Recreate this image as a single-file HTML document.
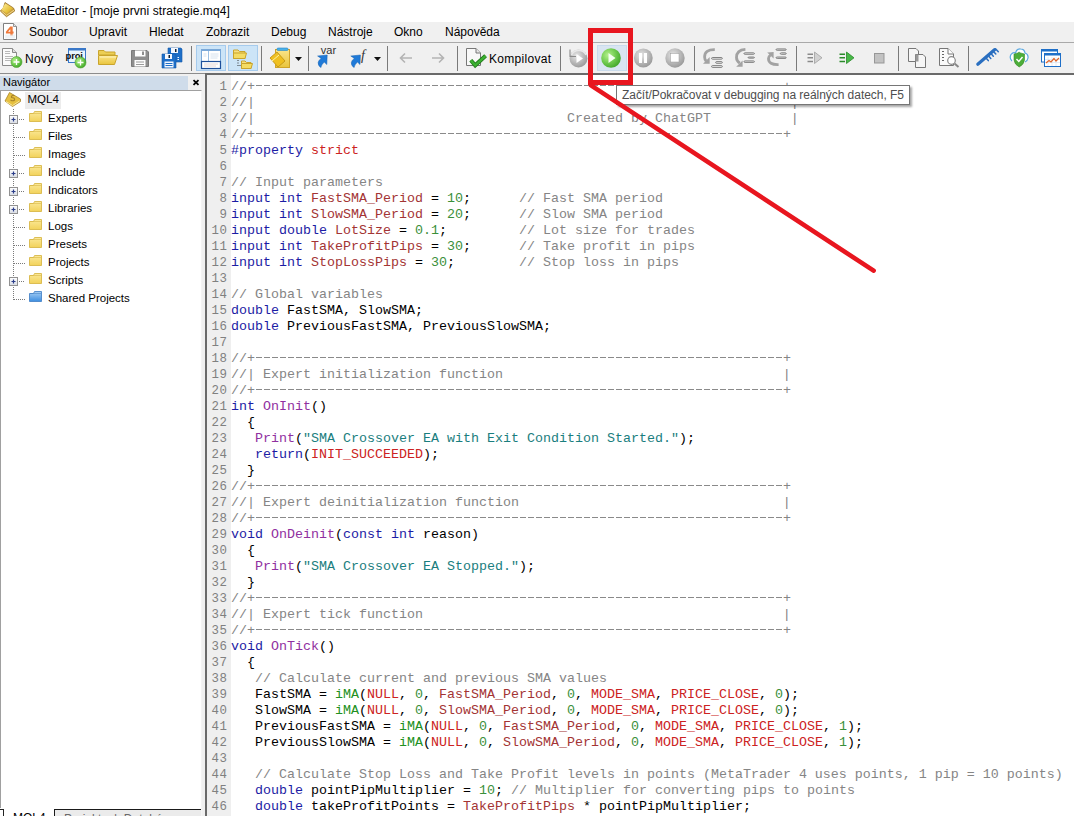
<!DOCTYPE html>
<html><head><meta charset="utf-8">
<style>
*{margin:0;padding:0;box-sizing:border-box}
html,body{width:1074px;height:820px;overflow:hidden;background:#fff;font-family:"Liberation Sans",sans-serif;font-size:12px;color:#000}
svg{position:absolute;overflow:visible}
#title{position:absolute;left:0;top:0;width:1074px;height:22px;background:#fff}
#title .t{position:absolute;left:20px;top:4px;letter-spacing:.08px;font-size:12px;line-height:14px;color:#000}
#menu{position:absolute;left:0;top:22px;width:1074px;height:20px;background:#f0f0f0}
#menu span{position:absolute;top:3px;font-size:12px;line-height:14px;color:#000}
#tb{position:absolute;left:0;top:42px;width:1074px;height:32px;background:#f0f0f0}
#tbl1{position:absolute;left:0;top:42px;width:1074px;height:1px;background:#a9a9a9}
#tbl2{position:absolute;left:0;top:73px;width:1074px;height:1px;background:#8c8c8c}
.sep{position:absolute;top:46px;width:1px;height:25px;background:#7a7a7a}
.btn{position:absolute;top:45px;height:26px;background:#cce4f7;border:1px solid #a6cbed}
.lbl{position:absolute;font-size:12px;line-height:14px;color:#000;letter-spacing:.3px}
#nav{position:absolute;left:0;top:74px;width:205px;height:746px;background:#f0f0f0}
#navh{position:absolute;left:0;top:2px;width:188px;height:14px;background:#cfdcea}
#navh .t{position:absolute;left:3px;top:0px;font-size:11px;line-height:13px}
#navx{position:absolute;left:192px;top:5px}
#navbox{position:absolute;left:0;top:16px;width:202px;height:726px;background:#fff;border-top:1px solid #a0a0a0;border-right:1px solid #f4f4f4}
#navlb{position:absolute;left:0;top:90px;width:1px;height:718px;background:#a0a0a0}
#btab{position:absolute;left:0;top:808px;width:202px;height:8px;overflow:hidden}
.row{position:absolute;left:48px;font-size:11.5px;line-height:13px;color:#000}
#ed{position:absolute;left:205px;top:73px;width:869px;height:747px;background:#fff;border-left:2px solid #6a6a6a;border-top:2px solid #6a6a6a}
#gut{position:absolute;left:0;top:0;width:24px;height:745px;background:#efefef}
#nums{position:absolute;left:0;top:3.5px;width:20.5px;text-align:right;font-family:"Liberation Mono",monospace;font-size:12.4px;letter-spacing:.6px;line-height:16px;color:#808080}
#code{position:absolute;left:24px;top:3.5px;font-family:"Liberation Mono",monospace;font-size:13.33px;line-height:16px;color:#000;white-space:pre}
#code i{font-style:normal}
#code div{height:16px}
#code b.d{display:inline-block;height:16px;vertical-align:top;background:repeating-linear-gradient(90deg,transparent 0 1px,#8a8a8a 1px 7px,transparent 7px 8px) 0 6px/100% 1px no-repeat}
.k{color:#1c1ca4}.v{color:#a33434}.n{color:#3a903a}.f{color:#9030a0}.s{color:#1a7e7e}.c{color:#cc2222}.g{color:#858585}.b{color:#209020}
#tip{position:absolute;left:616px;top:85px;width:294px;height:20px;background:#fff;border:1px solid #767676;box-shadow:2px 2px 2px rgba(0,0,0,.35)}
#tip .t{position:absolute;left:5px;top:2px;font-size:12px;line-height:14px;color:#4e4e4e;white-space:nowrap;letter-spacing:-.045px}
#bot{position:absolute;left:0;top:816px;width:1074px;height:4px;background:#fff}
</style></head><body>
<div id="title">
<svg width="16" height="18" style="left:0;top:0">
<defs><linearGradient id="tg" x1="0" y1="0" x2="1" y2="1"><stop offset="0" stop-color="#fff0a0"/><stop offset=".6" stop-color="#e8c440"/><stop offset="1" stop-color="#c89a20"/></linearGradient></defs>
<path d="M5 2.5 L13.5 8 L14.7 11 L6.5 16.7 L0.3 11 L3.3 8 Z" fill="#caa040" stroke="#9a7428" stroke-width=".8"/>
<path d="M5.3 3.5 L13 8.3 L6.8 13.8 L1.5 9.8 Z" fill="url(#tg)"/>
<path d="M1.5 11 L6.6 15.3 L14 10.2" fill="none" stroke="#f4dc90" stroke-width=".9"/>
</svg>
<div class="t">MetaEditor - [moje prvni strategie.mq4]</div></div>
<div id="menu">
<svg width="16" height="18" style="left:3px;top:1px"><path d="M0.5 0.5 H10.5 L13.5 3.5 V16.5 H0.5 Z" fill="#fff" stroke="#808080"/><path d="M10.5 0.5 V3.5 H13.5" fill="#e4e4e4" stroke="#808080" stroke-width=".8"/><path d="M7.2 3.4 H9.7 V8.6 H10.6 V10.6 H9.7 V12.7 H7.3 V10.6 H2.9 V8.7 Z M7.3 6.2 L5.1 8.7 H7.3 Z" fill="#ef7a3c" fill-rule="evenodd"/><rect x="2" y="11.5" width="10" height="4" fill="#e8eef2" opacity=".7"/></svg>
<span style="left:29px">Soubor</span>
<span style="left:89px">Upravit</span>
<span style="left:149px">Hledat</span>
<span style="left:206px">Zobrazit</span>
<span style="left:271px">Debug</span>
<span style="left:328px">Nástroje</span>
<span style="left:394px">Okno</span>
<span style="left:445px">Nápověda</span>
</div>
<div id="tb"></div><div id="tbl1"></div><div id="tbl2"></div>

<div class="sep" style="left:191px"></div>
<div class="sep" style="left:261px"></div>
<div class="sep" style="left:308px"></div>
<div class="sep" style="left:387px"></div>
<div class="sep" style="left:457px"></div>
<div class="sep" style="left:560px"></div>
<div class="sep" style="left:694px"></div>
<div class="sep" style="left:796px"></div>
<div class="sep" style="left:898px"></div>
<div class="sep" style="left:968px"></div>
<div class="btn" style="left:196px;width:30px"></div>
<div class="btn" style="left:228px;width:30px"></div>
<div class="btn" style="left:597px;width:30px;background:#d9e5f1;border-color:#c9dbec"></div>
<div class="lbl" style="left:25px;top:52px">Nový</div>
<div class="lbl" style="left:489px;top:52px">Kompilovat</div>
<svg width="1074" height="74" style="left:0;top:0">
<defs>
<radialGradient id="gg" cx="35%" cy="35%" r="70%"><stop offset="0" stop-color="#b4f08c"/><stop offset=".55" stop-color="#72cc50"/><stop offset="1" stop-color="#44a82c"/></radialGradient>
<radialGradient id="gr" cx="40%" cy="35%" r="65%"><stop offset="0" stop-color="#e6e6e6"/><stop offset="1" stop-color="#9c9c9c"/></radialGradient>
<linearGradient id="yf" x1="0" y1="0" x2="0" y2="1"><stop offset="0" stop-color="#fbe58a"/><stop offset="1" stop-color="#e9c43c"/></linearGradient>
</defs>
<!-- new doc -->
<path d="M2.5 48.5 H12.5 L16.5 52.5 V65.5 H2.5 Z" fill="#fafafa" stroke="#8a8a8a"/>
<path d="M12.5 48.5 V52.5 H16.5" fill="#e0e0e0" stroke="#8a8a8a"/>
<path d="M5 51.5 H10 M5 53.5 H10 M5 56.5 H13 M5 58.5 H12 M5 60.5 H11" stroke="#b8b8b8"/>
<circle cx="16.5" cy="62" r="5.5" fill="url(#gg)" stroke="#4aa02a" stroke-width=".6"/>
<path d="M16.5 59 V65 M13.5 62 H19.5" stroke="#fff" stroke-width="1.3"/>
<!-- proj -->
<rect x="68.5" y="48.5" width="17" height="14" fill="#eaf4fc" stroke="#3a78c8"/>
<rect x="68" y="48" width="18" height="2.5" fill="#3a78c8"/>
<text x="65.6" y="58.6" font-family="Liberation Sans" font-weight="bold" font-size="9.5" fill="#111" letter-spacing="-.2">proj</text>
<circle cx="80.5" cy="62.5" r="5.5" fill="url(#gg)" stroke="#4aa02a" stroke-width=".6"/>
<path d="M80.5 59.5 V65.5 M77.5 62.5 H83.5" stroke="#fff" stroke-width="1.3"/>
<!-- open folder -->
<path d="M98.5 50.5 H104 L105.5 52 H115 V55 H98.5 Z" fill="#eccf55" stroke="#c9a42c"/>
<path d="M98.5 64.5 V55.5 H117.5 L114.5 64.5 Z" fill="url(#yf)" stroke="#c9a42c"/>
<path d="M100 57 H116" stroke="#fff3b8"/>
<!-- save gray -->
<path d="M131.5 50.5 H147 L148.5 52 V66.5 H131.5 Z" fill="#8e8e8e" stroke="#7a7a7a"/>
<rect x="135" y="50.5" width="10.5" height="6" fill="#fdfdfd"/>
<rect x="142" y="51.5" width="2" height="3.5" fill="#8e8e8e"/>
<rect x="134.5" y="60" width="11" height="6.5" fill="#fdfdfd"/>
<path d="M136 62 H144 M136 64.5 H144" stroke="#9a9a9a"/>
<!-- save all blue -->
<path d="M168 48 H181 L182 49 V62 H168 Z" fill="#1e6fc8" stroke="#1558a8" stroke-width=".6"/>
<rect x="171" y="48" width="7" height="5" fill="#f4f8ff"/><rect x="175" y="49" width="1.5" height="3" fill="#123"/>
<path d="M162 54 H175 L176 55 V68 H162 Z" fill="#1e6fc8" stroke="#1558a8" stroke-width=".6"/>
<rect x="165" y="54" width="7" height="5" fill="#f4f8ff"/><rect x="168.5" y="55" width="1.5" height="3" fill="#123"/>
<rect x="164.5" y="61.5" width="9" height="6" fill="#f4f8ff"/>
<path d="M165.5 63.5 H172.5 M165.5 65.5 H172.5" stroke="#1e6fc8"/>
<path d="M177.5 57.5 H179 M177.5 59.5 H179" stroke="#f4f8ff" stroke-width="1.2"/>
<!-- layout icon -->
<rect x="201.5" y="49.5" width="19" height="19" fill="#fff" stroke="#7aa8d8"/>
<rect x="201" y="49" width="20" height="2" fill="#7aa8d8"/>
<path d="M208.5 51 V61" stroke="#9cc0e4"/>
<path d="M203.5 54 H206.5 M203.5 56 H206.5 M210.5 54 H218.5 M210.5 56 H218.5 M210.5 58 H217.5" stroke="#d6e2ee"/>
<rect x="201.5" y="61.5" width="19" height="7" fill="#fff" stroke="#1e4f9a" stroke-width="1.2"/>
<path d="M204 64 H218 M204 66 H216" stroke="#e4d6d6"/>
<!-- toolbox folders -->
<path d="M233.5 50 H238 L239.5 51.5 H245 V58.5 H233.5 Z" fill="url(#yf)" stroke="#c9a42c"/>
<path d="M233.5 53 H246.5 L245 58.5 H233.5 Z" fill="#f4dc64" stroke="#c9a42c"/>
<path d="M241.5 61 H245 L246.5 62.5 H251 V68.5 H241.5 Z" fill="url(#yf)" stroke="#c9a42c"/>
<path d="M241.5 63.5 H252.5 L251 68.5 H241.5 Z" fill="#f4dc64" stroke="#c9a42c"/>
<path d="M238 60 V61 M238 62.5 V63.5 M238 65 V66 M240 65 V66" stroke="#333" stroke-width="1"/>
<!-- book clipboard -->
<rect x="275.5" y="49.5" width="14" height="18" fill="url(#yf)" stroke="#d0a42a"/>
<rect x="277" y="48" width="11" height="2.5" rx="1" fill="#4ab0e8" stroke="#2a88c8" stroke-width=".6"/>
<path d="M270 58 L277 52 L285 61 L278 67 Z" fill="#f0c020" stroke="#c89a18"/>
<path d="M272 61 L279 55" stroke="#fff3a0"/>
<path d="M295 57 H302 L298.5 61 Z" fill="#111"/>
<!-- var -->
<text x="320.8" y="53.8" font-family="Liberation Sans" font-size="11" fill="#333">var</text>
<path d="M317.6 56 L327.2 55 L326.8 64.5 L324.2 62 Q321.5 64.5 320.8 67.6 Q317.6 65.2 318.2 62.2 Q318.8 59.8 321.2 58.4 Z" fill="#1f7ad8" stroke="#1560b0" stroke-width=".5"/>
<!-- f -->
<text x="361" y="59.5" font-family="Liberation Serif" font-style="italic" font-size="14" fill="#333">f</text>
<path d="M350.8 56 L360.4 55 L360 64.5 L357.4 62 Q354.7 64.5 354 67.6 Q350.8 65.2 351.4 62.2 Q352 59.8 354.4 58.4 Z" fill="#1f7ad8" stroke="#1560b0" stroke-width=".5"/>
<path d="M374 57 H381 L377.5 61 Z" fill="#111"/>
<!-- arrows -->
<path d="M401 58 H412 M405 53.5 L400.5 58 L405 62.5" fill="none" stroke="#b4b4b4" stroke-width="1.6"/>
<path d="M432 58 H443 M439 53.5 L443.5 58 L439 62.5" fill="none" stroke="#b4b4b4" stroke-width="1.6"/>
<!-- compile -->
<path d="M466.5 48.5 H476 L480.5 53 V65.5 H466.5 Z" fill="#f8f8f8" stroke="#777"/>
<path d="M476 48.5 V53 H480.5" fill="#e6e6e6" stroke="#777"/>
<path d="M470.8 60.3 L475.2 65.3 L485.6 55.8" fill="none" stroke="#1f7a1a" stroke-width="4"/><path d="M470.8 60.3 L475.2 65.3 L485.6 55.8" fill="none" stroke="#3cb032" stroke-width="2.4"/>
<!-- restart -->
<circle cx="578.5" cy="58.5" r="9" fill="url(#gr)"/>
<path d="M571.5 55 A8 8 0 0 1 586 55" fill="none" stroke="#e8e8e8" stroke-width="1.6"/>
<path d="M570 49.5 V56.5 H576" fill="none" stroke="#8a8a8a" stroke-width="1.1"/>
<path d="M576.5 54 L583 58.5 L576.5 63 Z" fill="#fff"/>
<!-- play -->
<circle cx="611" cy="58" r="9.8" fill="url(#gg)"/>
<path d="M608.5 53 L615.5 58 L608.5 63 Z" fill="#f4fff0"/>
<!-- pause -->
<circle cx="643.3" cy="58" r="9.4" fill="url(#gr)"/>
<rect x="639" y="53" width="3" height="10" fill="#fff"/><rect x="644" y="53" width="3" height="10" fill="#fff"/>
<!-- stop -->
<circle cx="675" cy="58" r="9.7" fill="url(#gr)"/>
<rect x="670.5" y="53.5" width="8.5" height="8.5" fill="#fff" stroke="#999" stroke-width=".5"/>
<!-- step into -->
<path d="M714.8 49.6 Q704.6 49.4 704.6 57 Q704.6 59.5 706.2 61.2" fill="none" stroke="#a2a2a2" stroke-width="2.8"/>
<path d="M703 63.7 L709.7 57 L709.7 63.7 Z" fill="#a2a2a2"/>
<rect x="711.55" y="57.55" width="10.80" height="1.60" rx="1.1" fill="#fbfbfb" stroke="#6e6e6e" stroke-width=".9"/><rect x="715.65" y="61.65" width="6.70" height="1.60" rx="1.1" fill="#fbfbfb" stroke="#6e6e6e" stroke-width=".9"/><rect x="711.55" y="65.65" width="10.80" height="1.70" rx="1.1" fill="#fbfbfb" stroke="#6e6e6e" stroke-width=".9"/>
<!-- step over -->
<path d="M745.4 49.4 Q736.5 50 736.5 57.5 Q736.5 61 739.8 63.2" fill="none" stroke="#a2a2a2" stroke-width="2.8"/>
<path d="M736.2 66.7 L742.6 60.5 L742.6 66.7 Z" fill="#a2a2a2"/>
<rect x="743.95" y="52.85" width="10.50" height="1.40" rx="1.1" fill="#fbfbfb" stroke="#6e6e6e" stroke-width=".9"/><rect x="748.05" y="57.05" width="6.40" height="1.10" rx="1.1" fill="#fbfbfb" stroke="#6e6e6e" stroke-width=".9"/><rect x="743.95" y="60.95" width="10.50" height="1.40" rx="1.1" fill="#fbfbfb" stroke="#6e6e6e" stroke-width=".9"/>
<!-- step out -->
<path d="M778.6 64.6 Q768.5 65 768.5 58.5 Q768.5 56.5 770.5 55" fill="none" stroke="#a2a2a2" stroke-width="2.8"/>
<path d="M767.2 52.4 L773.6 52.1 L773.6 58.6 Z" fill="#a2a2a2"/>
<rect x="776.05" y="48.95" width="10.20" height="1.30" rx="1.1" fill="#fbfbfb" stroke="#6e6e6e" stroke-width=".9"/><rect x="780.25" y="52.85" width="6.00" height="1.40" rx="1.1" fill="#fbfbfb" stroke="#6e6e6e" stroke-width=".9"/><rect x="776.05" y="57.05" width="10.20" height="1.30" rx="1.1" fill="#fbfbfb" stroke="#6e6e6e" stroke-width=".9"/>
<!-- profile gray -->
<path d="M807.5 54.3 H813 M807.5 57.8 H813 M807.5 61.5 H813" stroke="#8a8a8a" stroke-width="1.4"/>
<path d="M814.5 52 L822 57.8 L814.5 63.5 Z" fill="#d2d2d2" stroke="#a0a0a0" stroke-width=".8"/>
<!-- profile green -->
<path d="M839.5 54.3 H845 M839.5 57.8 H845 M839.5 61.5 H845" stroke="#2a8a2a" stroke-width="1.4"/>
<path d="M846.5 52 L854 57.8 L846.5 63.5 Z" fill="#48b848" stroke="#2a8a2a" stroke-width=".8"/>
<!-- gray square -->
<rect x="874.5" y="53.5" width="9.5" height="9.5" fill="#c2c2c2" stroke="#979797"/>
<!-- compare docs -->
<path d="M908.5 48.5 H916 L918.5 51 V61.5 H908.5 Z" fill="#f6f6f6" stroke="#777"/>
<path d="M915.5 54.5 H923 L925.5 57 V67.5 H915.5 Z" fill="#f6f6f6" stroke="#777"/>
<rect x="915.5" y="54.5" width="3" height="7" fill="#9a9a9a"/>
<!-- doc search -->
<path d="M939.5 48.5 H948 L953.5 54 V65.5 H939.5 Z" fill="#fafafa" stroke="#777"/>
<path d="M948 48.5 V54 H953.5" fill="#fff" stroke="#777"/>
<path d="M942 51.5 H944 M942 54.5 H944 M942 57.5 H944 M942 60.5 H944" stroke="#666" stroke-width="1.2"/>
<circle cx="951.5" cy="60.5" r="3.8" fill="#fff" stroke="#888" stroke-width="1.2"/>
<path d="M954.5 63.5 L958.5 67" stroke="#888" stroke-width="2"/>
<!-- comb -->
<path d="M977.8 64.2 L994.5 49.8" stroke="#2a6fc0" stroke-width="3.2" stroke-linecap="round"/>
<path d="M985.5 57.5 l2.8 3.1 M988.0 55.3 l2.8 3.1 M990.5 53.1 l2.8 3.1 M993.0 50.9 l2.8 3.1 M995.5 48.7 l2.8 3.1" stroke="#2a6fc0" stroke-width="1.5" stroke-linecap="round"/>
<!-- cloud shield -->
<path d="M1012 61 Q1009 58 1011 54.5 Q1013 52 1015.5 53 Q1016.5 48.5 1020.5 48.8 Q1024.5 49 1025 53 Q1028.5 54 1028 58 Q1027.5 61 1025 62" fill="#fff" stroke="#5aa8e0" stroke-width="1.2"/>
<path d="M1014 54 Q1019 53 1019 52 Q1019.5 53 1024.5 54 V60 Q1024 64.5 1019.2 67 Q1014.5 64.5 1014 60 Z" fill="#4cae3a" stroke="#3a8a2a" stroke-width=".6"/>
<path d="M1016.5 59 L1018.8 61.5 L1022.5 57" fill="none" stroke="#fff" stroke-width="1.4"/>
<!-- chart windows -->
<rect x="1041.5" y="49.5" width="16" height="12.5" fill="#fff" stroke="#1e6fc8"/>
<rect x="1041" y="49" width="17" height="2.5" fill="#1e6fc8"/>
<rect x="1044.5" y="53.5" width="16" height="13" fill="#fff" stroke="#1e6fc8"/>
<rect x="1044" y="53" width="17" height="2.5" fill="#1e6fc8"/>
<path d="M1048 57 V66 M1052 57 V66 M1056 57 V66 M1045 59.5 H1060 M1045 62.5 H1060" stroke="#dce6f2" stroke-width=".8"/>
<path d="M1046 63 L1049 60.5 L1051 62 L1054 58.5 L1056 61 L1059 58" fill="none" stroke="#e0652a" stroke-width="1.2"/>
</svg>

<div id="nav">
<div id="navh"><div class="t">Navigátor</div></div>
<svg id="navx" width="8" height="8" style="left:192px;top:5px"><path d="M1.5 1.2 L6.5 5.8 M6.5 1.2 L1.5 5.8" stroke="#000" stroke-width="1.8"/></svg>
<div id="navbox"></div>
</div>
<svg width="205" height="320" style="left:0;top:0">
<defs><linearGradient id="fy" x1="0" y1="0" x2="0" y2="1"><stop offset="0" stop-color="#fbe99a"/><stop offset="1" stop-color="#f2d25a"/></linearGradient>
<linearGradient id="fb" x1="0" y1="0" x2="0" y2="1"><stop offset="0" stop-color="#a9d0f5"/><stop offset="1" stop-color="#3d8ee0"/></linearGradient>
<linearGradient id="pb" x1="0" y1="0" x2="0" y2="1"><stop offset="0" stop-color="#ffffff"/><stop offset="1" stop-color="#d8dce4"/></linearGradient></defs>
<path d="M9.5 92.5 L20.5 99 L20.5 101.5 L12.5 106.5 L5 101 Z" fill="#e6c040" stroke="#a8842a" stroke-width=".8"/>
<path d="M6 101.5 L12.5 105.5 L19.5 101" fill="none" stroke="#f8e8a0" stroke-width="1"/>
<path d="M14.5 95.5 Q11 95 11.5 97.5 Q15 97.5 14.5 100 Q13 101.5 10.5 100" fill="none" stroke="#a8842a" stroke-width="1.2"/>
<rect x="13" y="109" width="1" height="1" fill="#7a7a7a"/>
<rect x="13" y="111" width="1" height="1" fill="#7a7a7a"/>
<rect x="13" y="113" width="1" height="1" fill="#7a7a7a"/>
<rect x="13" y="115" width="1" height="1" fill="#7a7a7a"/>
<rect x="13" y="117" width="1" height="1" fill="#7a7a7a"/>
<rect x="13" y="119" width="1" height="1" fill="#7a7a7a"/>
<rect x="13" y="121" width="1" height="1" fill="#7a7a7a"/>
<rect x="13" y="123" width="1" height="1" fill="#7a7a7a"/>
<rect x="13" y="125" width="1" height="1" fill="#7a7a7a"/>
<rect x="13" y="127" width="1" height="1" fill="#7a7a7a"/>
<rect x="13" y="129" width="1" height="1" fill="#7a7a7a"/>
<rect x="13" y="131" width="1" height="1" fill="#7a7a7a"/>
<rect x="13" y="133" width="1" height="1" fill="#7a7a7a"/>
<rect x="13" y="135" width="1" height="1" fill="#7a7a7a"/>
<rect x="13" y="137" width="1" height="1" fill="#7a7a7a"/>
<rect x="13" y="139" width="1" height="1" fill="#7a7a7a"/>
<rect x="13" y="141" width="1" height="1" fill="#7a7a7a"/>
<rect x="13" y="143" width="1" height="1" fill="#7a7a7a"/>
<rect x="13" y="145" width="1" height="1" fill="#7a7a7a"/>
<rect x="13" y="147" width="1" height="1" fill="#7a7a7a"/>
<rect x="13" y="149" width="1" height="1" fill="#7a7a7a"/>
<rect x="13" y="151" width="1" height="1" fill="#7a7a7a"/>
<rect x="13" y="153" width="1" height="1" fill="#7a7a7a"/>
<rect x="13" y="155" width="1" height="1" fill="#7a7a7a"/>
<rect x="13" y="157" width="1" height="1" fill="#7a7a7a"/>
<rect x="13" y="159" width="1" height="1" fill="#7a7a7a"/>
<rect x="13" y="161" width="1" height="1" fill="#7a7a7a"/>
<rect x="13" y="163" width="1" height="1" fill="#7a7a7a"/>
<rect x="13" y="165" width="1" height="1" fill="#7a7a7a"/>
<rect x="13" y="167" width="1" height="1" fill="#7a7a7a"/>
<rect x="13" y="169" width="1" height="1" fill="#7a7a7a"/>
<rect x="13" y="171" width="1" height="1" fill="#7a7a7a"/>
<rect x="13" y="173" width="1" height="1" fill="#7a7a7a"/>
<rect x="13" y="175" width="1" height="1" fill="#7a7a7a"/>
<rect x="13" y="177" width="1" height="1" fill="#7a7a7a"/>
<rect x="13" y="179" width="1" height="1" fill="#7a7a7a"/>
<rect x="13" y="181" width="1" height="1" fill="#7a7a7a"/>
<rect x="13" y="183" width="1" height="1" fill="#7a7a7a"/>
<rect x="13" y="185" width="1" height="1" fill="#7a7a7a"/>
<rect x="13" y="187" width="1" height="1" fill="#7a7a7a"/>
<rect x="13" y="189" width="1" height="1" fill="#7a7a7a"/>
<rect x="13" y="191" width="1" height="1" fill="#7a7a7a"/>
<rect x="13" y="193" width="1" height="1" fill="#7a7a7a"/>
<rect x="13" y="195" width="1" height="1" fill="#7a7a7a"/>
<rect x="13" y="197" width="1" height="1" fill="#7a7a7a"/>
<rect x="13" y="199" width="1" height="1" fill="#7a7a7a"/>
<rect x="13" y="201" width="1" height="1" fill="#7a7a7a"/>
<rect x="13" y="203" width="1" height="1" fill="#7a7a7a"/>
<rect x="13" y="205" width="1" height="1" fill="#7a7a7a"/>
<rect x="13" y="207" width="1" height="1" fill="#7a7a7a"/>
<rect x="13" y="209" width="1" height="1" fill="#7a7a7a"/>
<rect x="13" y="211" width="1" height="1" fill="#7a7a7a"/>
<rect x="13" y="213" width="1" height="1" fill="#7a7a7a"/>
<rect x="13" y="215" width="1" height="1" fill="#7a7a7a"/>
<rect x="13" y="217" width="1" height="1" fill="#7a7a7a"/>
<rect x="13" y="219" width="1" height="1" fill="#7a7a7a"/>
<rect x="13" y="221" width="1" height="1" fill="#7a7a7a"/>
<rect x="13" y="223" width="1" height="1" fill="#7a7a7a"/>
<rect x="13" y="225" width="1" height="1" fill="#7a7a7a"/>
<rect x="13" y="227" width="1" height="1" fill="#7a7a7a"/>
<rect x="13" y="229" width="1" height="1" fill="#7a7a7a"/>
<rect x="13" y="231" width="1" height="1" fill="#7a7a7a"/>
<rect x="13" y="233" width="1" height="1" fill="#7a7a7a"/>
<rect x="13" y="235" width="1" height="1" fill="#7a7a7a"/>
<rect x="13" y="237" width="1" height="1" fill="#7a7a7a"/>
<rect x="13" y="239" width="1" height="1" fill="#7a7a7a"/>
<rect x="13" y="241" width="1" height="1" fill="#7a7a7a"/>
<rect x="13" y="243" width="1" height="1" fill="#7a7a7a"/>
<rect x="13" y="245" width="1" height="1" fill="#7a7a7a"/>
<rect x="13" y="247" width="1" height="1" fill="#7a7a7a"/>
<rect x="13" y="249" width="1" height="1" fill="#7a7a7a"/>
<rect x="13" y="251" width="1" height="1" fill="#7a7a7a"/>
<rect x="13" y="253" width="1" height="1" fill="#7a7a7a"/>
<rect x="13" y="255" width="1" height="1" fill="#7a7a7a"/>
<rect x="13" y="257" width="1" height="1" fill="#7a7a7a"/>
<rect x="13" y="259" width="1" height="1" fill="#7a7a7a"/>
<rect x="13" y="261" width="1" height="1" fill="#7a7a7a"/>
<rect x="13" y="263" width="1" height="1" fill="#7a7a7a"/>
<rect x="13" y="265" width="1" height="1" fill="#7a7a7a"/>
<rect x="13" y="267" width="1" height="1" fill="#7a7a7a"/>
<rect x="13" y="269" width="1" height="1" fill="#7a7a7a"/>
<rect x="13" y="271" width="1" height="1" fill="#7a7a7a"/>
<rect x="13" y="273" width="1" height="1" fill="#7a7a7a"/>
<rect x="13" y="275" width="1" height="1" fill="#7a7a7a"/>
<rect x="13" y="277" width="1" height="1" fill="#7a7a7a"/>
<rect x="13" y="279" width="1" height="1" fill="#7a7a7a"/>
<rect x="13" y="281" width="1" height="1" fill="#7a7a7a"/>
<rect x="13" y="283" width="1" height="1" fill="#7a7a7a"/>
<rect x="13" y="285" width="1" height="1" fill="#7a7a7a"/>
<rect x="13" y="287" width="1" height="1" fill="#7a7a7a"/>
<rect x="13" y="289" width="1" height="1" fill="#7a7a7a"/>
<rect x="13" y="291" width="1" height="1" fill="#7a7a7a"/>
<rect x="13" y="293" width="1" height="1" fill="#7a7a7a"/>
<rect x="13" y="295" width="1" height="1" fill="#7a7a7a"/>
<rect x="13" y="297" width="1" height="1" fill="#7a7a7a"/>
<rect x="13" y="299" width="1" height="1" fill="#7a7a7a"/>
<rect x="19" y="119" width="1" height="1" fill="#7a7a7a"/>
<rect x="21" y="119" width="1" height="1" fill="#7a7a7a"/>
<rect x="23" y="119" width="1" height="1" fill="#7a7a7a"/>
<rect x="9.5" y="115.5" width="8" height="8" fill="url(#pb)" stroke="#919191"/>
<path d="M11.5 119.5 H15.5 M13.5 117.5 V121.5" stroke="#2b3d8a" stroke-width="1.2"/>
<path d="M29.5 113.5 H33.5 L34.5 111.5 H41.5 V121.5 H29.5 Z" fill="url(#fy)" stroke="#d8b848" stroke-width=".9"/>
<path d="M30 113.5 H41" stroke="#d8b848" stroke-width=".6"/>
<rect x="14" y="137" width="1" height="1" fill="#7a7a7a"/>
<rect x="16" y="137" width="1" height="1" fill="#7a7a7a"/>
<rect x="18" y="137" width="1" height="1" fill="#7a7a7a"/>
<rect x="20" y="137" width="1" height="1" fill="#7a7a7a"/>
<rect x="22" y="137" width="1" height="1" fill="#7a7a7a"/>
<rect x="24" y="137" width="1" height="1" fill="#7a7a7a"/>
<path d="M29.5 131.5 H33.5 L34.5 129.5 H41.5 V139.5 H29.5 Z" fill="url(#fy)" stroke="#d8b848" stroke-width=".9"/>
<path d="M30 131.5 H41" stroke="#d8b848" stroke-width=".6"/>
<rect x="14" y="155" width="1" height="1" fill="#7a7a7a"/>
<rect x="16" y="155" width="1" height="1" fill="#7a7a7a"/>
<rect x="18" y="155" width="1" height="1" fill="#7a7a7a"/>
<rect x="20" y="155" width="1" height="1" fill="#7a7a7a"/>
<rect x="22" y="155" width="1" height="1" fill="#7a7a7a"/>
<rect x="24" y="155" width="1" height="1" fill="#7a7a7a"/>
<path d="M29.5 149.5 H33.5 L34.5 147.5 H41.5 V157.5 H29.5 Z" fill="url(#fy)" stroke="#d8b848" stroke-width=".9"/>
<path d="M30 149.5 H41" stroke="#d8b848" stroke-width=".6"/>
<rect x="19" y="173" width="1" height="1" fill="#7a7a7a"/>
<rect x="21" y="173" width="1" height="1" fill="#7a7a7a"/>
<rect x="23" y="173" width="1" height="1" fill="#7a7a7a"/>
<rect x="9.5" y="169.5" width="8" height="8" fill="url(#pb)" stroke="#919191"/>
<path d="M11.5 173.5 H15.5 M13.5 171.5 V175.5" stroke="#2b3d8a" stroke-width="1.2"/>
<path d="M29.5 167.5 H33.5 L34.5 165.5 H41.5 V175.5 H29.5 Z" fill="url(#fy)" stroke="#d8b848" stroke-width=".9"/>
<path d="M30 167.5 H41" stroke="#d8b848" stroke-width=".6"/>
<rect x="19" y="191" width="1" height="1" fill="#7a7a7a"/>
<rect x="21" y="191" width="1" height="1" fill="#7a7a7a"/>
<rect x="23" y="191" width="1" height="1" fill="#7a7a7a"/>
<rect x="9.5" y="187.5" width="8" height="8" fill="url(#pb)" stroke="#919191"/>
<path d="M11.5 191.5 H15.5 M13.5 189.5 V193.5" stroke="#2b3d8a" stroke-width="1.2"/>
<path d="M29.5 185.5 H33.5 L34.5 183.5 H41.5 V193.5 H29.5 Z" fill="url(#fy)" stroke="#d8b848" stroke-width=".9"/>
<path d="M30 185.5 H41" stroke="#d8b848" stroke-width=".6"/>
<rect x="19" y="209" width="1" height="1" fill="#7a7a7a"/>
<rect x="21" y="209" width="1" height="1" fill="#7a7a7a"/>
<rect x="23" y="209" width="1" height="1" fill="#7a7a7a"/>
<rect x="9.5" y="205.5" width="8" height="8" fill="url(#pb)" stroke="#919191"/>
<path d="M11.5 209.5 H15.5 M13.5 207.5 V211.5" stroke="#2b3d8a" stroke-width="1.2"/>
<path d="M29.5 203.5 H33.5 L34.5 201.5 H41.5 V211.5 H29.5 Z" fill="url(#fy)" stroke="#d8b848" stroke-width=".9"/>
<path d="M30 203.5 H41" stroke="#d8b848" stroke-width=".6"/>
<rect x="14" y="227" width="1" height="1" fill="#7a7a7a"/>
<rect x="16" y="227" width="1" height="1" fill="#7a7a7a"/>
<rect x="18" y="227" width="1" height="1" fill="#7a7a7a"/>
<rect x="20" y="227" width="1" height="1" fill="#7a7a7a"/>
<rect x="22" y="227" width="1" height="1" fill="#7a7a7a"/>
<rect x="24" y="227" width="1" height="1" fill="#7a7a7a"/>
<path d="M29.5 221.5 H33.5 L34.5 219.5 H41.5 V229.5 H29.5 Z" fill="url(#fy)" stroke="#d8b848" stroke-width=".9"/>
<path d="M30 221.5 H41" stroke="#d8b848" stroke-width=".6"/>
<rect x="14" y="245" width="1" height="1" fill="#7a7a7a"/>
<rect x="16" y="245" width="1" height="1" fill="#7a7a7a"/>
<rect x="18" y="245" width="1" height="1" fill="#7a7a7a"/>
<rect x="20" y="245" width="1" height="1" fill="#7a7a7a"/>
<rect x="22" y="245" width="1" height="1" fill="#7a7a7a"/>
<rect x="24" y="245" width="1" height="1" fill="#7a7a7a"/>
<path d="M29.5 239.5 H33.5 L34.5 237.5 H41.5 V247.5 H29.5 Z" fill="url(#fy)" stroke="#d8b848" stroke-width=".9"/>
<path d="M30 239.5 H41" stroke="#d8b848" stroke-width=".6"/>
<rect x="14" y="263" width="1" height="1" fill="#7a7a7a"/>
<rect x="16" y="263" width="1" height="1" fill="#7a7a7a"/>
<rect x="18" y="263" width="1" height="1" fill="#7a7a7a"/>
<rect x="20" y="263" width="1" height="1" fill="#7a7a7a"/>
<rect x="22" y="263" width="1" height="1" fill="#7a7a7a"/>
<rect x="24" y="263" width="1" height="1" fill="#7a7a7a"/>
<path d="M29.5 257.5 H33.5 L34.5 255.5 H41.5 V265.5 H29.5 Z" fill="url(#fy)" stroke="#d8b848" stroke-width=".9"/>
<path d="M30 257.5 H41" stroke="#d8b848" stroke-width=".6"/>
<rect x="19" y="281" width="1" height="1" fill="#7a7a7a"/>
<rect x="21" y="281" width="1" height="1" fill="#7a7a7a"/>
<rect x="23" y="281" width="1" height="1" fill="#7a7a7a"/>
<rect x="9.5" y="277.5" width="8" height="8" fill="url(#pb)" stroke="#919191"/>
<path d="M11.5 281.5 H15.5 M13.5 279.5 V283.5" stroke="#2b3d8a" stroke-width="1.2"/>
<path d="M29.5 275.5 H33.5 L34.5 273.5 H41.5 V283.5 H29.5 Z" fill="url(#fy)" stroke="#d8b848" stroke-width=".9"/>
<path d="M30 275.5 H41" stroke="#d8b848" stroke-width=".6"/>
<rect x="14" y="299" width="1" height="1" fill="#7a7a7a"/>
<rect x="16" y="299" width="1" height="1" fill="#7a7a7a"/>
<rect x="18" y="299" width="1" height="1" fill="#7a7a7a"/>
<rect x="20" y="299" width="1" height="1" fill="#7a7a7a"/>
<rect x="22" y="299" width="1" height="1" fill="#7a7a7a"/>
<rect x="24" y="299" width="1" height="1" fill="#7a7a7a"/>
<path d="M29.5 293.5 H33.5 L34.5 291.5 H41.5 V301.5 H29.5 Z" fill="url(#fb)" stroke="#4a86c8" stroke-width=".9"/>
<path d="M30 293.5 H41" stroke="#4a86c8" stroke-width=".6"/>
</svg>
<div style="position:absolute;left:25px;top:91.5px;width:36px;height:17px;background:#ececec"></div>
<div class="row" style="left:27.5px;top:93px">MQL4</div>
<div class="row" style="top:111.5px">Experts</div>
<div class="row" style="top:129.5px">Files</div>
<div class="row" style="top:147.5px">Images</div>
<div class="row" style="top:165.5px">Include</div>
<div class="row" style="top:183.5px">Indicators</div>
<div class="row" style="top:201.5px">Libraries</div>
<div class="row" style="top:219.5px">Logs</div>
<div class="row" style="top:237.5px">Presets</div>
<div class="row" style="top:255.5px">Projects</div>
<div class="row" style="top:273.5px">Scripts</div>
<div class="row" style="top:291.5px">Shared Projects</div>
<div id="navlb"></div>
<div id="btab">
<div style="position:absolute;left:0;top:1px;width:3px;height:1px;background:#222"></div>
<div style="position:absolute;left:3px;top:1px;width:1px;height:8px;background:#222"></div>
<div style="position:absolute;left:13px;top:3px;font-size:12px;line-height:14px;color:#000">MQL4</div>
<div style="position:absolute;left:54px;top:1px;width:147px;height:10px;background:#ebebeb;border-top:1px solid #1a1a1a;border-left:1px solid #1a1a1a"></div>
<div style="position:absolute;left:64px;top:4px;font-size:12px;line-height:14px;color:#6a6a6a;white-space:nowrap">Projekty&nbsp;&nbsp;|&nbsp;&nbsp;Databáze</div>
</div>
<div id="ed">
<div id="gut"><div id="nums"><div>1</div><div>2</div><div>3</div><div>4</div><div>5</div><div>6</div><div>7</div><div>8</div><div>9</div><div>10</div><div>11</div><div>12</div><div>13</div><div>14</div><div>15</div><div>16</div><div>17</div><div>18</div><div>19</div><div>20</div><div>21</div><div>22</div><div>23</div><div>24</div><div>25</div><div>26</div><div>27</div><div>28</div><div>29</div><div>30</div><div>31</div><div>32</div><div>33</div><div>34</div><div>35</div><div>36</div><div>37</div><div>38</div><div>39</div><div>40</div><div>41</div><div>42</div><div>43</div><div>44</div><div>45</div><div>46</div></div></div>
<div id="code"><div><i class="g">//+<b class="d" style="width:528px"></b>+</i></div><div><i class="g">//|                                                                   |</i></div><div><i class="g">//|                                       Created by ChatGPT          |</i></div><div><i class="g">//+<b class="d" style="width:528px"></b>+</i></div><div><i class="k">#property</i> <i class="c">strict</i></div><div></div><div><i class="g">// Input parameters</i></div><div><i class="k">input</i> <i class="k">int</i> <i class="v">FastSMA_Period</i> = <i class="n">10</i>;      <i class="g">// Fast SMA period</i></div><div><i class="k">input</i> <i class="k">int</i> <i class="v">SlowSMA_Period</i> = <i class="n">20</i>;      <i class="g">// Slow SMA period</i></div><div><i class="k">input</i> <i class="k">double</i> <i class="v">LotSize</i> = <i class="n">0.1</i>;         <i class="g">// Lot size for trades</i></div><div><i class="k">input</i> <i class="k">int</i> <i class="v">TakeProfitPips</i> = <i class="n">30</i>;      <i class="g">// Take profit in pips</i></div><div><i class="k">input</i> <i class="k">int</i> <i class="v">StopLossPips</i> = <i class="n">30</i>;        <i class="g">// Stop loss in pips</i></div><div></div><div><i class="g">// Global variables</i></div><div><i class="k">double</i> FastSMA, SlowSMA;</div><div><i class="k">double</i> PreviousFastSMA, PreviousSlowSMA;</div><div></div><div><i class="g">//+<b class="d" style="width:528px"></b>+</i></div><div><i class="g">//| Expert initialization function                                   |</i></div><div><i class="g">//+<b class="d" style="width:528px"></b>+</i></div><div><i class="k">int</i> <i class="f">OnInit</i>()</div><div>  {</div><div>   <i class="f">Print</i>(<i class="s">"SMA Crossover EA with Exit Condition Started."</i>);</div><div>   <i class="k">return</i>(<i class="c">INIT_SUCCEEDED</i>);</div><div>  }</div><div><i class="g">//+<b class="d" style="width:528px"></b>+</i></div><div><i class="g">//| Expert deinitialization function                                 |</i></div><div><i class="g">//+<b class="d" style="width:528px"></b>+</i></div><div><i class="k">void</i> <i class="f">OnDeinit</i>(<i class="k">const</i> <i class="k">int</i> reason)</div><div>  {</div><div>   <i class="f">Print</i>(<i class="s">"SMA Crossover EA Stopped."</i>);</div><div>  }</div><div><i class="g">//+<b class="d" style="width:528px"></b>+</i></div><div><i class="g">//| Expert tick function                                             |</i></div><div><i class="g">//+<b class="d" style="width:528px"></b>+</i></div><div><i class="k">void</i> <i class="f">OnTick</i>()</div><div>  {</div><div>   <i class="g">// Calculate current and previous SMA values</i></div><div>   FastSMA = <i class="b">iMA</i>(<i class="c">NULL</i>, <i class="n">0</i>, <i class="v">FastSMA_Period</i>, <i class="n">0</i>, <i class="c">MODE_SMA</i>, <i class="c">PRICE_CLOSE</i>, <i class="n">0</i>);</div><div>   SlowSMA = <i class="b">iMA</i>(<i class="c">NULL</i>, <i class="n">0</i>, <i class="v">SlowSMA_Period</i>, <i class="n">0</i>, <i class="c">MODE_SMA</i>, <i class="c">PRICE_CLOSE</i>, <i class="n">0</i>);</div><div>   PreviousFastSMA = <i class="b">iMA</i>(<i class="c">NULL</i>, <i class="n">0</i>, <i class="v">FastSMA_Period</i>, <i class="n">0</i>, <i class="c">MODE_SMA</i>, <i class="c">PRICE_CLOSE</i>, <i class="n">1</i>);</div><div>   PreviousSlowSMA = <i class="b">iMA</i>(<i class="c">NULL</i>, <i class="n">0</i>, <i class="v">SlowSMA_Period</i>, <i class="n">0</i>, <i class="c">MODE_SMA</i>, <i class="c">PRICE_CLOSE</i>, <i class="n">1</i>);</div><div></div><div>   <i class="g">// Calculate Stop Loss and Take Profit levels in points (MetaTrader 4 uses points, 1 pip = 10 points)</i></div><div>   <i class="k">double</i> pointPipMultiplier = <i class="n">10</i>; <i class="g">// Multiplier for converting pips to points</i></div><div>   <i class="k">double</i> takeProfitPoints = <i class="v">TakeProfitPips</i> * pointPipMultiplier;</div></div>
</div>
<div id="tip"><div class="t">Začít/Pokračovat v debugging na reálných datech, F5</div></div>
<svg width="1074" height="820" style="left:0;top:0"><rect x="590.5" y="30.5" width="40" height="52" fill="none" stroke="#e8161f" stroke-width="5"/><path d="M591 85.3 L873.6 270.7" stroke="#e8161f" stroke-width="4.6" stroke-linecap="round"/></svg>
<div id="bot"></div>
</body></html>
